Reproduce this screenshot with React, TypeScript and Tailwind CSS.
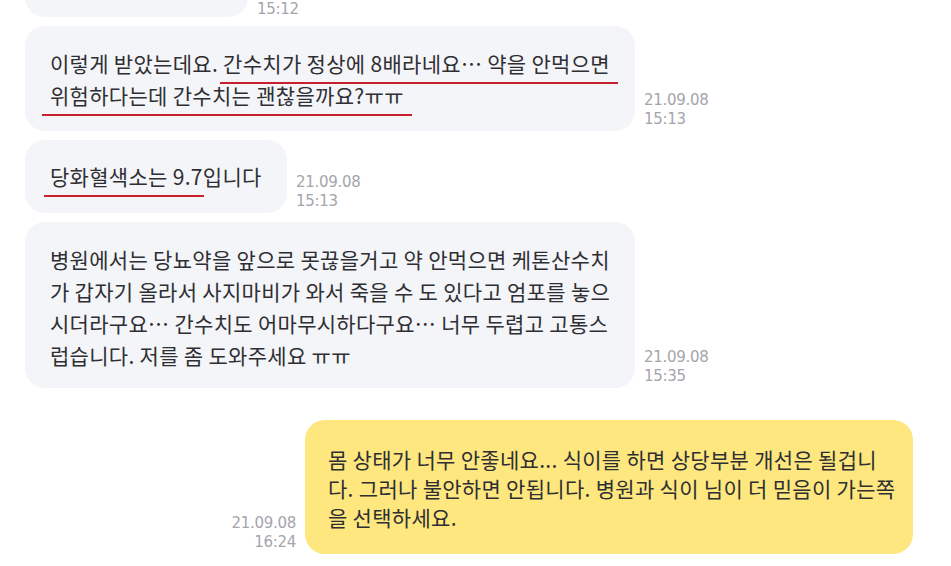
import React from 'react';

const FONT = "font-['Noto_Sans_CJK_KR','Noto_Sans',sans-serif]";

// red hand-drawn style underline that runs a little past the words
const Mark: React.FC<{ children: React.ReactNode; left?: string; right?: string }> = ({ children, left = 'after:-left-[6px]', right = 'after:-right-[8px]' }) => (
  <span className={`relative after:absolute after:-bottom-[6px] after:h-[2px] after:bg-[#c8202e] after:content-[''] ${left} ${right}`}>
    {children}
  </span>
);

const Stamp: React.FC<{ date?: string; time: string; align?: 'left' | 'right'; className?: string }> = ({ date, time, align = 'left', className = 'pb-[2px]' }) => (
  <div className={`flex flex-col text-[15px] leading-[19px] tracking-[-0.3px] text-[#a4a5ac] font-['DejaVu_Sans',sans-serif] ${align === 'right' ? 'items-end' : 'items-start'} ${className}`}>
    {date && <span>{date}</span>}
    <span>{time}</span>
  </div>
);

const Incoming: React.FC<{ children?: React.ReactNode; className?: string; rowClass?: string; stampClass?: string; date?: string; time: string }> = ({ children, className = '', rowClass = '', stampClass, date, time }) => (
  <div className={`flex items-end gap-[9px] ${rowClass}`}>
    <div className={`rounded-[20px] bg-[#f4f5f8] text-[21px] leading-[32px] tracking-[0.3px] text-[#2f2f33] ${className}`}>{children}</div>
    <Stamp date={date} time={time} className={stampClass} />
  </div>
);

export default function App() {
  return (
    <div className={`h-[566px] w-[951px] overflow-hidden bg-white ${FONT}`}>
      <div className="flex flex-col gap-[9px] pl-[25px]">
        {/* previous message, mostly scrolled away */}
        <Incoming rowClass="-mt-[56px]" className="h-[73px] w-[223px]" stampClass="-mb-[2px]" time="15:12" />

        <Incoming className="w-[610px] pl-[25px] pr-[10px] pt-[21px] pb-[20px] whitespace-nowrap" date="21.09.08" time="15:13">
          <p>
            이렇게 받았는데요. <Mark left="after:-left-[3px]">간수치가 정상에 8배라네요… 약을 안먹으면</Mark>
            <br />
            <Mark left="after:-left-[8px]" right="after:-right-[8px]">위험하다는데 간수치는 괜찮을까요?ㅠㅠ</Mark>
          </p>
        </Incoming>

        <Incoming className="w-[262px] pl-[25px] pt-[20px] pb-[21px] whitespace-nowrap" date="21.09.08" time="15:13">
          <p>
            <Mark right="after:-right-[1px]">당화혈색소는 9.7</Mark>입니다
          </p>
        </Incoming>

        <Incoming className="w-[610px] pl-[25px] pr-[10px] pt-[21px] pb-[17px] whitespace-nowrap" date="21.09.08" time="15:35">
          <p>
            병원에서는 당뇨약을 앞으로 못끊을거고 약 안먹으면 케톤산수치
            <br />
            가 갑자기 올라서 사지마비가 와서 죽을 수 도 있다고 엄포를 놓으
            <br />
            시더라구요… 간수치도 어마무시하다구요… 너무 두렵고 고통스
            <br />
            럽습니다. 저를 좀 도와주세요 ㅠㅠ
          </p>
        </Incoming>
      </div>

      <div className="mt-[32px] flex items-end justify-end gap-[9px] pr-[38px]">
        <Stamp date="21.09.08" time="16:24" align="right" />
        <div className="w-[608px] whitespace-nowrap rounded-[20px] bg-[#fde77e] pl-[23px] pr-[10px] pt-[25px] pb-[22px] text-[21px] leading-[29px] tracking-[0.3px] text-[#2f2f33]">
          <p>
            몸 상태가 너무 안좋네요... 식이를 하면 상당부분 개선은 될겁니
            <br />
            다. 그러나 불안하면 안됩니다. 병원과 식이 님이 더 믿음이 가는쪽
            <br />
            을 선택하세요.
          </p>
        </div>
      </div>
    </div>
  );
}
